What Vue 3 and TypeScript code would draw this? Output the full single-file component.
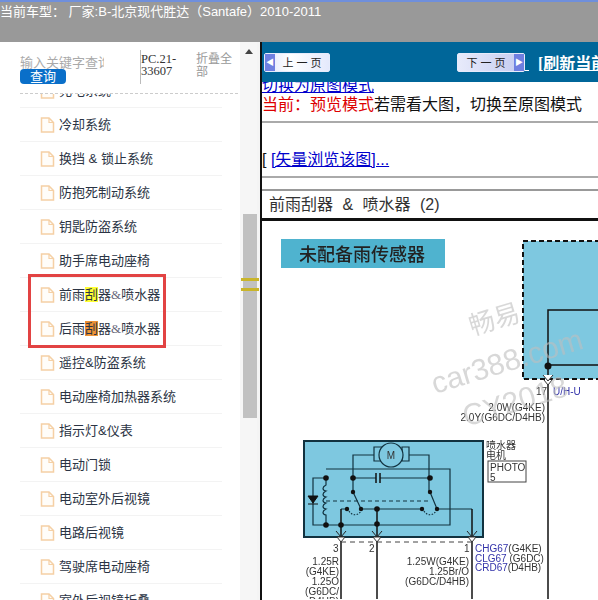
<template>
  <div class="page">
    <div class="top-bar">当前车型： 厂家:B-北京现代胜达（Santafe）2010-2011</div>
    <div class="main">
      <aside class="side">
        <div class="search">
          <div class="search-left">
            <div class="keyword">输入关键字查询</div>
            <button class="query">查询</button>
          </div>
          <div class="code">PC.21-33607</div>
          <div class="fold">折叠全部</div>
        </div>
        <div class="list-clip">
          <ul class="list">
            <li v-for="row in rows" :key="row.name" class="row">
              <svg class="doc" width="15" height="16" viewBox="0 0 15 16">
                <path d="M1.5 1h7.5l4.5 4.500v9.500h-12z" fill="#fffdf9" stroke="#f5d0a5" stroke-width="1.500" />
                <path d="M9 1v4.500h4.500" fill="none" stroke="#f5d0a5" stroke-width="1.200" />
              </svg>
              <span class="name">
                <template v-if="row.hit">{{ row.before }}<mark :class="row.hit">刮</mark>器<span class="amp">&amp;</span>喷水器</template>
                <template v-else>{{ row.name }}</template>
              </span>
            </li>
          </ul>
          <div class="red-box"></div>
        </div>
      </aside>
      <div class="scrollbar">
        <div class="arrow"></div>
        <div class="thumb"></div>
      </div>
      <div class="split">
        <div class="grip"></div>
      </div>
      <section class="view">
        <div class="nav">
          <button class="page-btn prev"><span class="tip">◀</span><span class="btn-text">上 一 页</span></button>
          <button class="page-btn next"><span class="btn-text">下 一 页</span><span class="tip">▶</span></button>
          <span class="dash"></span>
          <a class="refresh">[刷新当前页]</a>
        </div>
        <div class="content">
          <a class="switch">切换为原图模式</a>
          <div class="mode"><span class="red">当前：预览模式</span>若需看大图，切换至原图模式</div>
          <hr class="rule first" />
          <div class="vector">[ <a>[矢量浏览该图]...</a></div>
          <hr class="rule" />
          <div class="sheet">
            <div class="sheet-title">前雨刮器 &amp; 喷水器 (2)</div>
            <svg class="diagram" width="335" height="378" viewBox="263 222 335 378">
              <rect x="281" y="240" width="164" height="29" fill="#4fb3cf" />
              <text x="362" y="262" class="banner" text-anchor="middle">未配备雨传感器</text>

              <rect x="523" y="242" width="90" height="138" fill="#7ec8e0" stroke="#111" stroke-width="2" stroke-dasharray="5 3" />
              <path d="M600 311H548V600M548 366H600" class="wire" />
              <circle cx="548" cy="367" r="3.500" fill="#111" />
              <path d="M543 376l5 6 5-6M544 381l4 5 4-5" fill="#fff" stroke="#333" />
              <text x="536" y="396" class="small">17</text>
              <text x="553" y="396" class="small blue">U/H-U</text>
              <g class="small" text-anchor="end">
                <text x="545" y="412">2.0W(G4KE)</text>
                <text x="545" y="422">2.0Y(G6DC/D4HB)</text>
              </g>

              <rect x="304" y="442" width="179" height="96" fill="#7ec8e0" stroke="#12323f" stroke-width="2" />
              <path d="M353 493V456H374M409 456H429V493M326 470H450V526H313V479H326M353 479H376M380 479H430" class="wire thin" />
              <path d="M376 474v10M380 474v10" class="wire" />
              <path d="M374 448h8v14h-8zM402 448h7v14h-7z" class="wire thin" />
              <circle cx="391" cy="456" r="12" fill="#7ec8e0" stroke="#12323f" stroke-width="1.200" />
              <text x="391" y="460" class="small" text-anchor="middle">M</text>
              <path d="M308 497h10l-5 7zM308 505h10" fill="#111" stroke="#111" />
              <path d="M326 479v7c-4 2-4 5 0 6c-4 2-4 5 0 6c-4 2-4 5 0 6c-4 2-4 5 0 6c-4 2-4 5 0 6v8" class="wire thin" />
              <path d="M326 502H430" class="wire thin" stroke-dasharray="4 3" />
              <path d="M353 493L361 510H422M430 493L437 510H472M347 510H341" class="wire thin" />
              <path d="M341 510V600M377 510V600M472 510V600" class="wire" />
              <path d="M349 512c3 5 9 5 12 0M424 512c3 5 9 5 12 0" class="wire thin" stroke-dasharray="1.500 1.500" />
              <g fill="#111">
                <circle cx="326" cy="479" r="2.800" />
                <circle cx="353" cy="479" r="2.800" />
                <circle cx="430" cy="479" r="2.800" />
                <circle cx="353" cy="493" r="2.200" />
                <circle cx="430" cy="493" r="2.200" />
                <circle cx="347" cy="510" r="2.200" />
                <circle cx="361" cy="510" r="2.200" />
                <circle cx="377" cy="510" r="2.800" />
                <circle cx="422" cy="510" r="2.200" />
                <circle cx="437" cy="510" r="2.200" />
                <circle cx="326" cy="526" r="2.800" />
                <circle cx="341" cy="526" r="2.800" />
                <circle cx="377" cy="525" r="2.800" />
              </g>
              <path d="M336 532l5 6 5-6M372 532l5 6 5-6M467 532l5 6 5-6" fill="none" stroke="#222" />
              <path d="M337 538l4 5 4-5zM373 538l4 5 4-5zM468 538l4 5 4-5z" fill="#fff" stroke="#333" />
              <path d="M341 543H472" stroke="#444" stroke-dasharray="5 4" fill="none" />

              <text x="486" y="450" class="small">喷水器</text>
              <text x="486" y="460" class="small">电机</text>
              <rect x="488" y="462" width="38" height="21" fill="none" stroke="#444" />
              <text x="490" y="472" class="small">PHOTO</text>
              <text x="490" y="482" class="small">5</text>

              <g class="small">
                <text x="333" y="553">3</text>
                <text x="369" y="553">2</text>
                <text x="464" y="553">1</text>
              </g>
              <g class="small" text-anchor="end">
                <text x="339" y="566">1.25R</text>
                <text x="339" y="576">(G4KE)</text>
                <text x="339" y="586">1.25O</text>
                <text x="339" y="596">(G6DC/</text>
                <text x="339" y="606">D4HB)</text>
                <text x="469" y="566">1.25W(G4KE)</text>
                <text x="469" y="576">1.25Br/O</text>
                <text x="469" y="586">(G6DC/D4HB)</text>
              </g>
              <g class="small">
                <text x="475" y="553"><tspan class="blue">CHG67</tspan>(G4KE)</text>
                <text x="475" y="563"><tspan class="blue">CLG67</tspan> (G6DC)</text>
                <text x="475" y="572"><tspan class="blue">CRD67</tspan>(D4HB)</text>
              </g>

              <g class="mark" text-anchor="middle">
                <text x="0" y="0" transform="translate(497 329) rotate(-17)" font-size="26">畅易</text>
                <text x="0" y="0" transform="translate(510 372) rotate(-17)" font-size="30">car388.com</text>
                <text x="0" y="0" transform="translate(518 412) rotate(-17)" font-size="30">CY2018</text>
              </g>
            </svg>
          </div>
        </div>
      </section>
    </div>
  </div>
</template>

<script setup lang="ts">
interface Row {
  name: string
  before?: string
  hit?: string
}

const rows: Row[] = [
  { name: '充电系统' },
  { name: '冷却系统' },
  { name: '换挡 & 锁止系统' },
  { name: '防抱死制动系统' },
  { name: '钥匙防盗系统' },
  { name: '助手席电动座椅' },
  { name: '前雨刮器&喷水器', before: '前雨', hit: 'yellow' },
  { name: '后雨刮器&喷水器', before: '后雨', hit: 'orange' },
  { name: '遥控&防盗系统' },
  { name: '电动座椅加热器系统' },
  { name: '指示灯&仪表' },
  { name: '电动门锁' },
  { name: '电动室外后视镜' },
  { name: '电路后视镜' },
  { name: '驾驶席电动座椅' },
  { name: '室外后视镜折叠' },
]
</script>

<style>
html,
body {
  margin: 0;
  background: #fff;
  overflow: hidden;
}
</style>

<style scoped>
.page {
  width: 598px;
  height: 600px;
  overflow: hidden;
  display: flex;
  flex-direction: column;
  font-family: "Liberation Sans", "Noto Sans CJK SC", sans-serif;
}

.top-bar {
  height: 40px;
  flex: none;
  border-top: 2px solid #6f8fdc;
  background: #999;
  color: #fff;
  font-size: 13px;
  line-height: 19px;
  white-space: nowrap;
  overflow: hidden;
}

.main {
  flex: 1;
  display: flex;
  min-height: 0;
  position: relative;
}

.side {
  width: 240px;
  flex: none;
  display: flex;
  flex-direction: column;
}

.search {
  height: 52px;
  flex: none;
  display: flex;
  box-sizing: border-box;
  margin-left: 20px;
  margin-right: 2px;
  border-bottom: 1px dashed #ccc;
  padding-top: 8px;
}

.search-left {
  width: 120px;
  padding-top: 5px;
}

.keyword {
  width: 84px;
  height: 15px;
  overflow: hidden;
  white-space: nowrap;
  font-size: 13px;
  line-height: 15px;
  color: #aaa;
}

.query {
  display: block;
  width: 46px;
  height: 15px;
  margin-top: -1px;
  padding: 0;
  border: none;
  border-radius: 4px;
  background: #0a6fc9;
  color: #fff;
  font-family: inherit;
  font-size: 13px;
  line-height: 15px;
}

.code {
  width: 56px;
  height: 34px;
  box-sizing: border-box;
  border-left: 1px solid #bbb;
  font-family: "Liberation Serif", serif;
  font-size: 12.500px;
  line-height: 12px;
  color: #333;
  padding-top: 3px;
}

.fold {
  width: 40px;
  font-size: 12px;
  line-height: 13px;
  color: #999;
  padding-top: 3px;
}

.list-clip {
  flex: 1;
  min-height: 0;
  overflow: hidden;
  position: relative;
}

.list {
  list-style: none;
  margin: -20px 0 0 20px;
  padding: 0;
  width: 202px;
}

.row {
  height: 33px;
  border-bottom: 1px solid #f3f3f3;
  display: flex;
  align-items: center;
  padding-left: 20px;
  gap: 4px;
}

.doc {
  flex: none;
}

.name {
  font-size: 13px;
  line-height: 16px;
  color: #2b3444;
  white-space: nowrap;
}

.amp {
  font-family: "Liberation Serif", serif;
  font-size: 13px;
  color: #667;
}

mark {
  color: #2b3444;
}

mark.yellow {
  background: #ffff33;
}

mark.orange {
  background: #ee9336;
}

.red-box {
  position: absolute;
  left: 28px;
  top: 180px;
  width: 132px;
  height: 68px;
  border: 3px solid #e24343;
}

.scrollbar {
  width: 17px;
  flex: none;
  background: #f6f6f6;
  position: relative;
}

.arrow {
  position: absolute;
  left: 5px;
  top: 7px;
  border-left: 4px solid transparent;
  border-right: 4px solid transparent;
  border-bottom: 5px solid #444;
}

.thumb {
  position: absolute;
  left: 3px;
  top: 172px;
  width: 14px;
  height: 204px;
  background: #c1c1c1;
}

.split {
  width: 3px;
  flex: none;
  background: #f4f4f4;
}

.grip {
  position: absolute;
  left: 241px;
  top: 236px;
  width: 18px;
  height: 7px;
  border-top: 3px solid #c9b52a;
  border-bottom: 3px solid #c9b52a;
}

.view {
  flex: 1;
  min-width: 0;
  border-left: 2px solid #111;
  display: flex;
  flex-direction: column;
}

.nav {
  height: 40px;
  flex: none;
  background: #006699;
  display: flex;
  align-items: center;
  white-space: nowrap;
  overflow: hidden;
  padding-left: 2px;
}

.page-btn {
  height: 19px;
  padding: 0;
  flex: none;
  display: flex;
  align-items: center;
  border: 1px solid #e6ebfb;
  border-radius: 2px;
  font-family: inherit;
  font-size: 11px;
  color: #222;
}

.prev {
  width: 66px;
  background: linear-gradient(to right, #dfe3fb, #fff 40%, #e4e9fc);
}

.next {
  width: 68px;
  margin-left: 127px;
  background: linear-gradient(to right, #e8ebfb, #c3caf0);
}

.tip {
  width: 10px;
  height: 100%;
  background: #6f7fe0;
  color: #fff;
  font-size: 8px;
  line-height: 17px;
}

.btn-text {
  flex: 1;
  text-align: center;
}

.dash {
  flex: none;
  width: 4px;
  height: 1px;
  margin-top: 16px;
  background: #fff;
}

.refresh {
  margin-left: 9px;
  color: #fff;
  font-family: "Liberation Serif", "Noto Sans CJK SC", serif;
  font-size: 16px;
  font-weight: bold;
  text-decoration: underline;
}

.content {
  flex: 1;
  min-height: 0;
  overflow: hidden;
  font-size: 16px;
  line-height: 18px;
  color: #111;
}

.switch {
  display: block;
  margin-top: -5px;
  color: #00c;
  text-decoration: underline;
}

.mode {
  white-space: nowrap;
  padding-top: 1px;
}

.red {
  color: #d00;
}

.rule {
  margin: 0;
  border: none;
  border-top: 2px solid #aaa;
}

.rule.first {
  margin-top: 7px;
}

.vector {
  margin-top: 28px;
  margin-bottom: 7px;
}

.vector a {
  color: #00c;
  text-decoration: underline;
}

.sheet {
  margin-top: 11px;
  border-top: 2px solid #999;
}

.sheet-title {
  height: 27px;
  padding-left: 7px;
  line-height: 27px;
  font-size: 16px;
  word-spacing: 5px;
  color: #333;
  border-bottom: 3px solid #111;
}

.diagram {
  display: block;
  filter: blur(0.3px);
  margin-left: 1px;
}

.banner {
  font-size: 18px;
  font-weight: 500;
  fill: #222;
}

.mark {
  fill: rgba(190, 190, 190, 0.6);
  font-family: "Liberation Sans", "Noto Sans CJK SC", sans-serif;
}

.wire {
  fill: none;
  stroke: #111;
  stroke-width: 1.500;
}

.wire.thin {
  stroke: #12323f;
  stroke-width: 1.200;
}

.small {
  font-size: 10px;
  fill: #333;
}

.blue {
  fill: #3333aa;
}
</style>
